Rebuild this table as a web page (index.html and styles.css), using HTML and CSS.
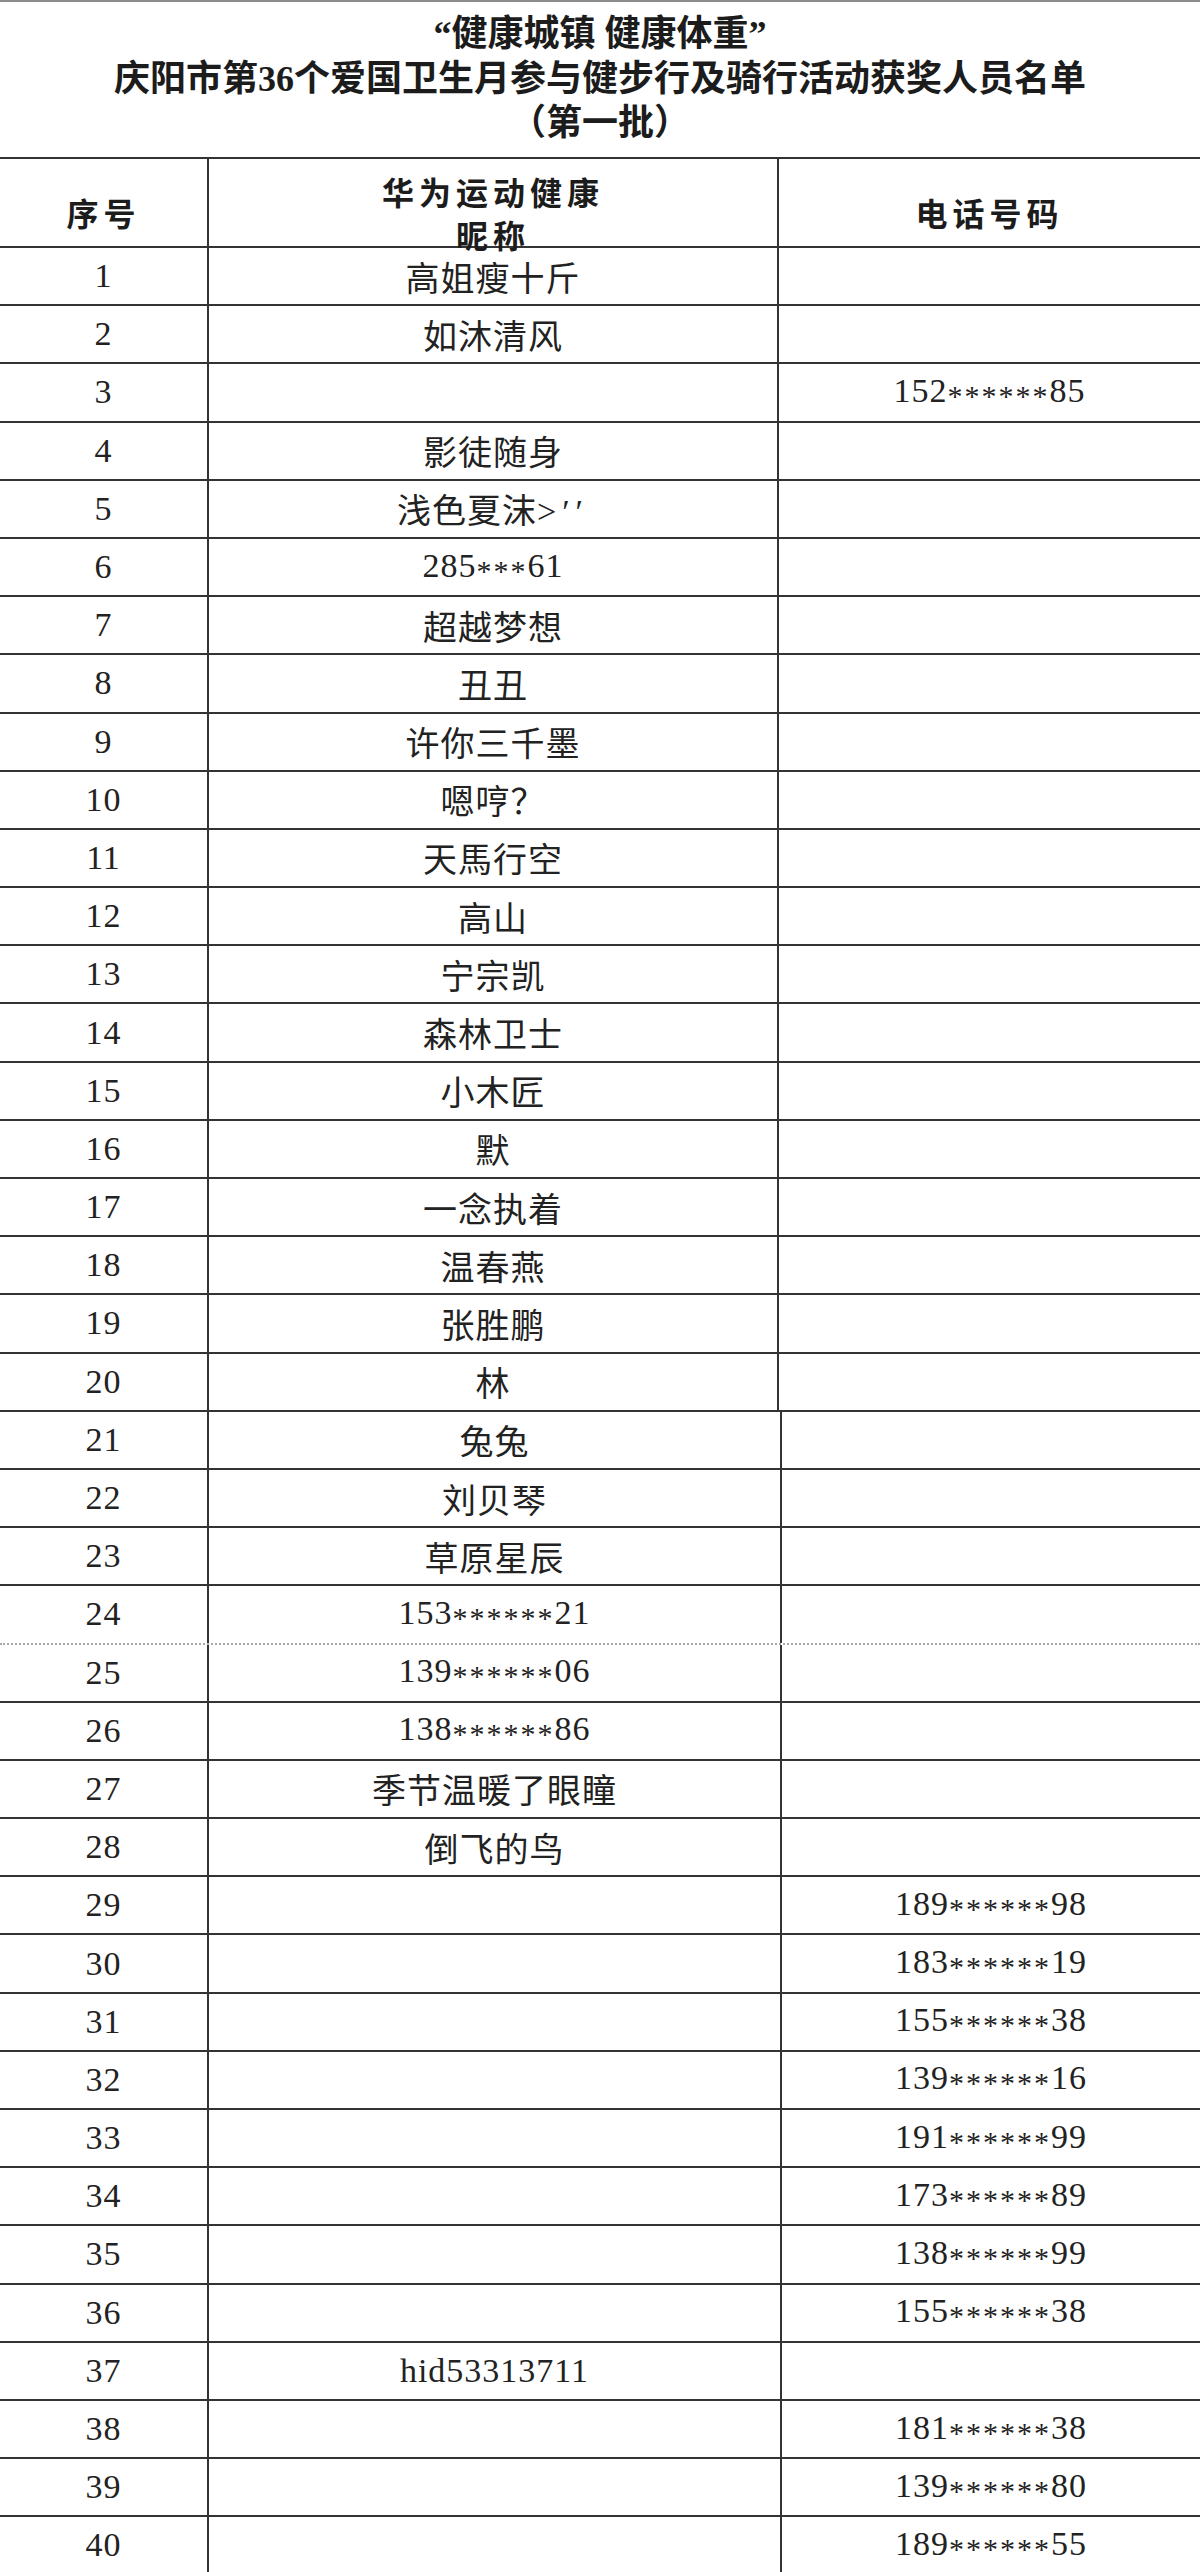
FILE: index.html
```html
<!DOCTYPE html>
<html lang="zh-CN">
<head>
<meta charset="utf-8">
<title>获奖人员名单</title>
<link rel="stylesheet" href="styles.css">
</head>
<body>
<div class="sheet">
  <div class="title">
    <div class="t1">“健康城镇 健康体重”</div>
    <div class="t2">庆阳市第36个爱国卫生月参与健步行及骑行活动获奖人员名单</div>
    <div class="t3">（第一批）</div>
  </div>
  <div class="table">
    <div class="row head">
      <div class="cell">序号</div>
      <div class="cell two"><span>华为运动健康</span><span>昵称</span></div>
      <div class="cell">电话号码</div>
    </div>
    <div class="row"><div class="cell">1</div><div class="cell">高姐瘦十斤</div><div class="cell"></div></div>
    <div class="row"><div class="cell">2</div><div class="cell">如沐清风</div><div class="cell"></div></div>
    <div class="row"><div class="cell">3</div><div class="cell"></div><div class="cell"><span>152<span class="ast">******</span>85</span></div></div>
    <div class="row"><div class="cell">4</div><div class="cell">影徒随身</div><div class="cell"></div></div>
    <div class="row"><div class="cell">5</div><div class="cell"><span>浅色夏沫<span class="sym">&gt;′′</span></span></div><div class="cell"></div></div>
    <div class="row"><div class="cell">6</div><div class="cell"><span>285<span class="ast">***</span>61</span></div><div class="cell"></div></div>
    <div class="row"><div class="cell">7</div><div class="cell">超越梦想</div><div class="cell"></div></div>
    <div class="row"><div class="cell">8</div><div class="cell">丑丑</div><div class="cell"></div></div>
    <div class="row"><div class="cell">9</div><div class="cell">许你三千墨</div><div class="cell"></div></div>
    <div class="row"><div class="cell">10</div><div class="cell">嗯哼？</div><div class="cell"></div></div>
    <div class="row"><div class="cell">11</div><div class="cell">天馬行空</div><div class="cell"></div></div>
    <div class="row"><div class="cell">12</div><div class="cell">高山</div><div class="cell"></div></div>
    <div class="row"><div class="cell">13</div><div class="cell">宁宗凯</div><div class="cell"></div></div>
    <div class="row"><div class="cell">14</div><div class="cell">森林卫士</div><div class="cell"></div></div>
    <div class="row"><div class="cell">15</div><div class="cell">小木匠</div><div class="cell"></div></div>
    <div class="row"><div class="cell">16</div><div class="cell">默</div><div class="cell"></div></div>
    <div class="row"><div class="cell">17</div><div class="cell">一念执着</div><div class="cell"></div></div>
    <div class="row"><div class="cell">18</div><div class="cell">温春燕</div><div class="cell"></div></div>
    <div class="row"><div class="cell">19</div><div class="cell">张胜鹏</div><div class="cell"></div></div>
    <div class="row"><div class="cell">20</div><div class="cell">林</div><div class="cell"></div></div>
    <div class="row b"><div class="cell">21</div><div class="cell">兔兔</div><div class="cell"></div></div>
    <div class="row b"><div class="cell">22</div><div class="cell">刘贝琴</div><div class="cell"></div></div>
    <div class="row b"><div class="cell">23</div><div class="cell">草原星辰</div><div class="cell"></div></div>
    <div class="row b dotted"><div class="cell">24</div><div class="cell"><span>153<span class="ast">******</span>21</span></div><div class="cell"></div></div>
    <div class="row b"><div class="cell">25</div><div class="cell"><span>139<span class="ast">******</span>06</span></div><div class="cell"></div></div>
    <div class="row b"><div class="cell">26</div><div class="cell"><span>138<span class="ast">******</span>86</span></div><div class="cell"></div></div>
    <div class="row b"><div class="cell">27</div><div class="cell">季节温暖了眼瞳</div><div class="cell"></div></div>
    <div class="row b"><div class="cell">28</div><div class="cell">倒飞的鸟</div><div class="cell"></div></div>
    <div class="row b"><div class="cell">29</div><div class="cell"></div><div class="cell"><span>189<span class="ast">******</span>98</span></div></div>
    <div class="row b"><div class="cell">30</div><div class="cell"></div><div class="cell"><span>183<span class="ast">******</span>19</span></div></div>
    <div class="row b"><div class="cell">31</div><div class="cell"></div><div class="cell"><span>155<span class="ast">******</span>38</span></div></div>
    <div class="row b"><div class="cell">32</div><div class="cell"></div><div class="cell"><span>139<span class="ast">******</span>16</span></div></div>
    <div class="row b"><div class="cell">33</div><div class="cell"></div><div class="cell"><span>191<span class="ast">******</span>99</span></div></div>
    <div class="row b"><div class="cell">34</div><div class="cell"></div><div class="cell"><span>173<span class="ast">******</span>89</span></div></div>
    <div class="row b"><div class="cell">35</div><div class="cell"></div><div class="cell"><span>138<span class="ast">******</span>99</span></div></div>
    <div class="row b"><div class="cell">36</div><div class="cell"></div><div class="cell"><span>155<span class="ast">******</span>38</span></div></div>
    <div class="row b"><div class="cell">37</div><div class="cell">hid53313711</div><div class="cell"></div></div>
    <div class="row b"><div class="cell">38</div><div class="cell"></div><div class="cell"><span>181<span class="ast">******</span>38</span></div></div>
    <div class="row b"><div class="cell">39</div><div class="cell"></div><div class="cell"><span>139<span class="ast">******</span>80</span></div></div>
    <div class="row b"><div class="cell">40</div><div class="cell"></div><div class="cell"><span>189<span class="ast">******</span>55</span></div></div>
  </div>
</div>
</body>
</html>
```

FILE: styles.css
```css
html, body {
  margin: 0;
  padding: 0;
  background: #ffffff;
}

.sheet {
  width: 1200px;
  color: #222222;
  font-family: "Liberation Serif", "Noto Sans CJK SC", serif;
  text-spacing-trim: space-all;
}

.title {
  box-sizing: border-box;
  height: 157px;
  border-top: 2px solid #8c8c8c;
  padding-top: 10px;
  text-align: center;
  font-weight: bold;
  font-size: 36px;
  line-height: 44.5px;
  color: #1c1c1c;
}

.table {
  border-top: 2px solid #333333;
}

.row {
  box-sizing: border-box;
  display: grid;
  grid-template-columns: 207px 570px 1fr;
  height: 58.2px;
  border-bottom: 2px solid #333333;
  font-size: 34px;
  letter-spacing: 1px;
}

.row.b {
  grid-template-columns: 207px 573px 1fr;
}

.row.dotted {
  border-bottom: 2px dotted #a8a8a8;
}

.row.head {
  height: 89px;
  font-size: 32px;
  font-weight: bold;
  letter-spacing: 5px;
  color: #1c1c1c;
}

.cell {
  display: flex;
  align-items: center;
  justify-content: center;
  white-space: nowrap;
}

.cell + .cell {
  border-left: 2px solid #333333;
}

.head .cell {
  padding-top: 6px;
}

.head .cell.two {
  flex-direction: column;
  padding-top: 14px;
  line-height: 43px;
}

.ast {
  font-size: 30px;
  letter-spacing: 2px;
  vertical-align: -4px;
}

.sym {
  letter-spacing: 6px;
}
```
